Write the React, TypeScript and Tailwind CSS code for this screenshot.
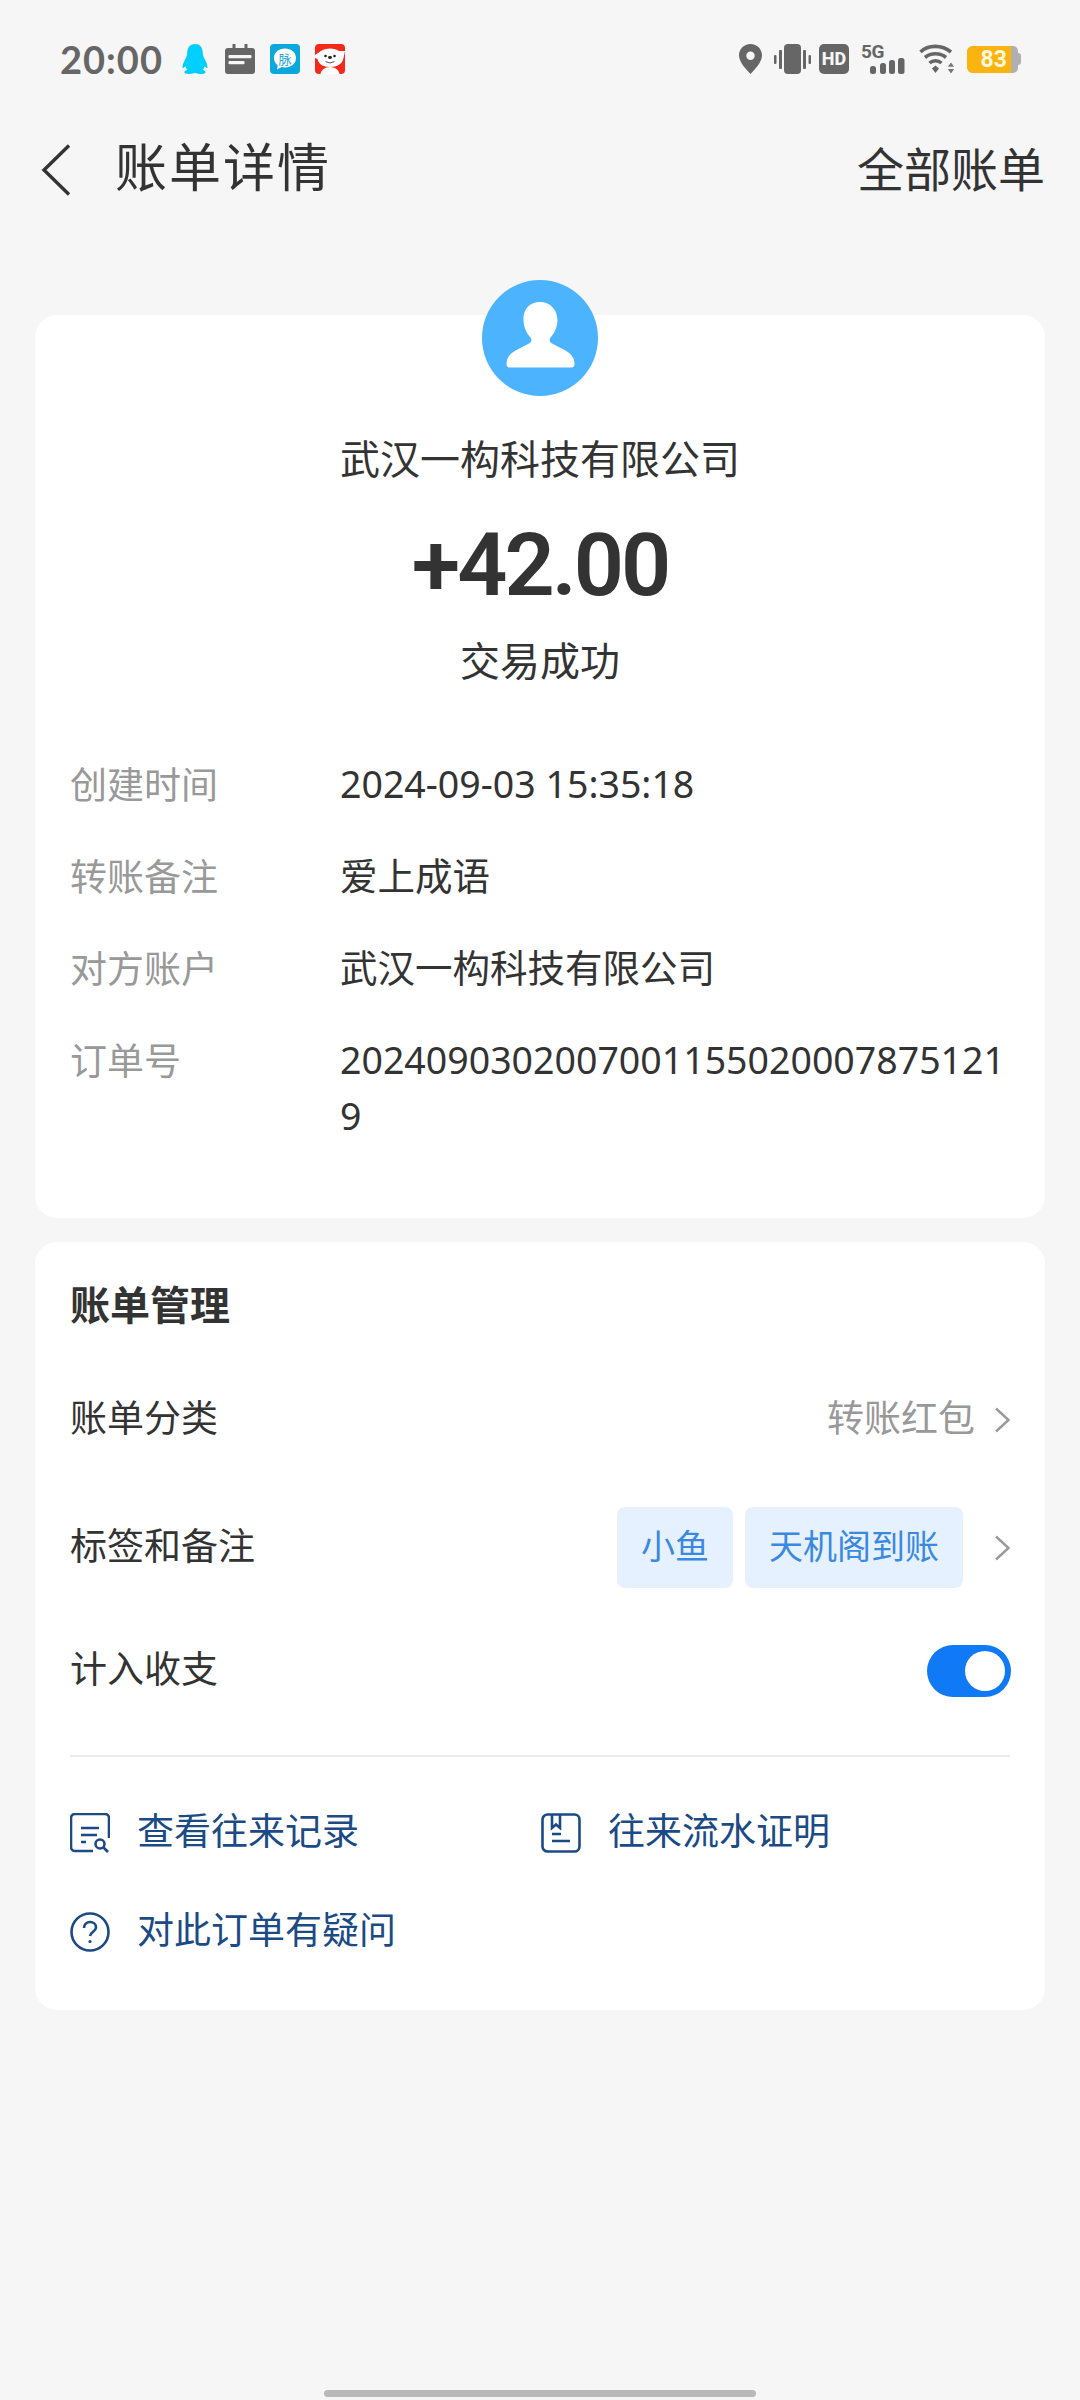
import React from "react";

const font = { fontFamily: 'Roboto, "Noto Sans CJK SC", sans-serif' };
const valueFont = { fontFamily: '"Noto Sans", "Noto Sans CJK SC", sans-serif' };

function Qq() {
  return (
    <svg width="26" height="30" viewBox="0 0 26 30" className="block">
      <path d="M13 0C7.200 0 5.200 4.400 5.200 9.500c0 2-.8 3.400-1.800 5.600C1.800 18 .2 21.500.6 23.800c.5.7 1.800-.6 2.700-1.600.3 1.400 1 2.500 2 3.600-1.600.5-2.900 1.300-2.900 2.400 0 1.400 3 1.800 5.600 1.800 2 0 3.800-.5 5-1.200 1.200.7 3 1.200 5 1.200 2.600 0 5.600-.4 5.600-1.800 0-1.100-1.300-1.900-2.900-2.400 1-1.100 1.700-2.200 2-3.600.9 1 2.200 2.300 2.700 1.600.4-2.300-1.200-5.800-2.800-8.700-1-2.200-1.800-3.600-1.800-5.600C20.800 4.400 18.800 0 13 0z" fill="#00cfff" />
    </svg>
  );
}

function CalendarGlyph() {
  return (
    <svg width="30" height="30" viewBox="0 0 30 30" className="block">
      <path d="M7.500 0h3v4h9V0h3v4H27a3 3 0 0 1 3 3v20a3 3 0 0 1-3 3H3a3 3 0 0 1-3-3V7a3 3 0 0 1 3-3h4.500z" fill="#666" />
      <rect x="3.500" y="11" width="23" height="3.200" rx="1" fill="#f6f6f6" />
      <rect x="3.500" y="17" width="16" height="3.200" rx="1" fill="#f6f6f6" />
    </svg>
  );
}

function Maimai() {
  return (
    <div className="relative flex h-[30px] w-[30px] items-center justify-center rounded-[4px] bg-[#0ba8dd]">
      <svg width="30" height="30" viewBox="0 0 30 30" className="absolute left-0 top-0">
        <path d="M15 4.500c6 0 11 3.800 11 9.500s-5 9.500-11 9.500c-1.200 0-2.300-.1-3.300-.4L7 25.500l.7-4.300C5.200 19.500 4 17 4 14c0-5.700 5-9.500 11-9.500z" fill="#fff" />
      </svg>
      <span className="relative text-[13px] leading-none text-[#2aa7d8]">脉</span>
    </div>
  );
}

function Jd() {
  return (
    <svg width="30" height="30" viewBox="0 0 30 30" className="block">
      <rect width="30" height="30" rx="4" fill="#f5281a" />
      <path d="M0 11 L6 7 C10 3.500 20 3.500 24 7 L30 7 L28.500 14 C27.500 20 22 23 15 23 C8 23 3.500 20 2.500 15 L0 14z" fill="#fff" />
      <path d="M5.500 30 C6 26 10 23 15 23 C20 23 24 26 24.500 30z" fill="#fff" />
      <circle cx="10.500" cy="12" r="1.300" fill="#222" />
      <circle cx="19.500" cy="12" r="1.300" fill="#222" />
      <ellipse cx="15" cy="13.500" rx="2" ry="1.400" fill="#222" />
      <path d="M10.500 17.500 Q15 20.500 19.500 17.500" stroke="#555" strokeWidth="1" fill="none" />
    </svg>
  );
}

function Pin() {
  return (
    <svg width="23" height="30" viewBox="0 0 23 30" className="block">
      <path fillRule="evenodd" d="M11.500 0C5 0 0 5 0 11.300c0 7 7.500 14.700 11.500 18.700C15.500 26 23 18.300 23 11.300 23 5 18 0 11.500 0zm0 7.500a4.200 4.200 0 1 1 0 8.400 4.200 4.200 0 0 1 0-8.400z" fill="#666" />
    </svg>
  );
}

function Vibrate() {
  return (
    <svg width="37" height="30" viewBox="0 0 37 30" className="block">
      <rect x="0" y="11" width="2.500" height="9" rx="1" fill="#666" />
      <rect x="5" y="6" width="3" height="19" rx="1" fill="#666" />
      <rect x="10" y="0" width="17" height="30" rx="4" fill="#666" />
      <rect x="29" y="6" width="3" height="19" rx="1" fill="#666" />
      <rect x="34.500" y="11" width="2.500" height="9" rx="1" fill="#666" />
    </svg>
  );
}

function Hd() {
  return (
    <div className="flex h-[30px] w-[30px] items-center justify-center rounded-[5px] bg-[#666] text-[18px] font-extrabold leading-none text-[#f6f6f6]" style={{ fontFamily: "Roboto, sans-serif" }}>
      HD
    </div>
  );
}

function Signal() {
  return (
    <div className="relative h-[30px] w-[44px]">
      <svg className="absolute bottom-0 left-0" width="44" height="30" viewBox="0 0 44 30">
        <rect x="9" y="22" width="6" height="8" rx="2.500" fill="#666" />
        <rect x="19" y="19" width="6" height="11" rx="2.500" fill="#666" />
        <rect x="28" y="16" width="6" height="14" rx="2.500" fill="#666" />
        <rect x="37" y="14" width="6.500" height="16" rx="2.500" fill="#666" />
      </svg>
      <span className="absolute left-0 top-[-2px] text-[19px] font-bold leading-[19px] tracking-[-0.5px] text-[#666]" style={{ fontFamily: "Roboto, sans-serif" }}>5G</span>
    </div>
  );
}

function Wifi() {
  return (
    <svg width="36" height="30" viewBox="0 0 36 30" className="block">
      <path d="M1.500 8C9 .5 23 .5 32 8" stroke="#666" strokeWidth="3.600" fill="none" />
      <path d="M6 13.500C12 8.500 21 8.500 27 13.500" stroke="#666" strokeWidth="3.600" fill="none" />
      <path d="M10.500 19C14 16 19 16 22.500 19" stroke="#666" strokeWidth="3.600" fill="none" />
      <path d="M13 24.500l3.500-3 3.500 3-3.500 4.500z" fill="#666" />
      <path d="M32 18.500l3.200 4.300h-6.400zM32 29.500l-3.200-4.500h6.400z" fill="#777" />
    </svg>
  );
}

function Battery() {
  return (
    <div className="flex h-[27px] items-center">
      <div className="h-[27px] w-[51px] overflow-hidden rounded-l-[6px] rounded-r-[5px] bg-[#b0b0b0]">
        <div className="flex h-full w-[44px] items-center justify-end bg-[#fbb40f] pr-[4px] text-[23px] font-bold leading-none text-[#fff8dc]" style={{ fontFamily: "Roboto, sans-serif" }}>
          83
        </div>
      </div>
      <div className="h-[12px] w-[3px] rounded-r-[3px] bg-[#b0b0b0]" />
    </div>
  );
}

function PersonIcon() {
  return (
    <svg width="116" height="116" viewBox="0 0 116 116" className="block">
      <circle cx="58" cy="58" r="58" fill="#4cb3ff" />
      <path d="M58 22c-10 0-17 7-16.500 18 .3 7 2.500 12.500 7 17.500 1.500 2 1 4.500-1.500 6-4.500 2.800-12 5.500-16.500 9-3.200 2.500-6 6-6 11.500 0 2.500 1 3.500 3.500 3.500h61c2.500 0 3.500-1 3.500-3.500 0-5.500-2.800-9-6-11.500-4.500-3.500-12-6.200-16.500-9-2.500-1.500-3-4-1.500-6 4.500-5 6.700-10.500 7-17.500C75 29 68 22 58 22z" fill="#fff" />
    </svg>
  );
}

function Chevron() {
  return (
    <svg width="15" height="26" viewBox="0 0 15 26" className="block">
      <path d="M1 1.500L13.500 13 1 24.500" stroke="#999" strokeWidth="2.400" fill="none" />
    </svg>
  );
}

function RecordIcon() {
  return (
    <svg width="40" height="40" viewBox="0 0 40 40" fill="none" stroke="#1b4a85" strokeWidth="2.600" className="block shrink-0">
      <path d="M23 38H5a4 4 0 0 1-4-4V5a4 4 0 0 1 4-4h30a4 4 0 0 1 4 4v20" />
      <path d="M11 15h18M11 22h16M11 29h5" />
      <circle cx="30" cy="31" r="4.500" />
      <path d="M33.500 34.500L38 39" />
    </svg>
  );
}

function ProofIcon() {
  return (
    <svg width="40" height="40" viewBox="0 0 40 40" fill="none" stroke="#1b4a85" strokeWidth="2.600" className="block shrink-0">
      <rect x="1.500" y="1.500" width="37" height="37" rx="5" />
      <path d="M11 2v13l4-3.500 4 3.500V2" />
      <path d="M11 21h9M11 28h18" />
    </svg>
  );
}

function HelpIcon() {
  return (
    <svg width="40" height="40" viewBox="0 0 40 40" fill="none" stroke="#1b4a85" strokeWidth="2.600" className="block shrink-0">
      <circle cx="20" cy="20" r="18.500" />
      <path d="M14 16c0-3.500 2.700-6 6-6s6 2.300 6 5.500c0 4-5.500 4.500-6 8.500" />
      <circle cx="20" cy="29.500" r="1.600" fill="#1b4a85" stroke="none" />
    </svg>
  );
}

function InfoRow({ label, children }: { label: string; children: React.ReactNode }) {
  return (
    <div className="flex leading-[56px]">
      <div className="w-[270px] shrink-0 text-[37px] text-[#999]">{label}</div>
      <div className="-mt-[3px] min-w-0 flex-1 break-all text-[37.5px] text-[#333]" style={valueFont}>{children}</div>
    </div>
  );
}

export default function App() {
  return (
    <div className="flex h-[2400px] w-[1080px] flex-col overflow-hidden bg-[#f6f6f6]" style={font}>
      <div className="mt-[29px] flex h-[60px] items-center justify-between pl-[60px] pr-[59px]">
        <div className="flex items-center">
          <span className="text-[38px] font-bold leading-none tracking-[1px] text-[#666]" style={{ fontFamily: "Lato, sans-serif" }}>20:00</span>
          <div className="ml-[19px] flex items-center">
            <Qq />
            <div className="ml-[17px]"><CalendarGlyph /></div>
            <div className="ml-[15px]"><Maimai /></div>
            <div className="ml-[15px]"><Jd /></div>
          </div>
        </div>
        <div className="flex items-center">
          <Pin />
          <div className="ml-[12px]"><Vibrate /></div>
          <div className="ml-[8px]"><Hd /></div>
          <div className="ml-[12px]"><Signal /></div>
          <div className="ml-[14px]"><Wifi /></div>
          <div className="ml-[12px]"><Battery /></div>
        </div>
      </div>

      <div className="mt-[51px] flex h-[60px] items-center justify-between pl-[41px] pr-[35px]">
        <div className="flex items-center">
          <svg width="30" height="52" viewBox="0 0 30 52" className="block">
            <path d="M28 1.500L3 26l25 24.500" stroke="#333" strokeWidth="3.400" fill="none" />
          </svg>
          <span className="ml-[44px] text-[52px] leading-none tracking-[2px] text-[#333]">账单详情</span>
        </div>
        <span className="text-[47px] leading-none text-[#333]">全部账单</span>
      </div>

      <div className="mx-[35px] mt-[115px] flex flex-col rounded-[22px] bg-white px-[35px] pb-[74px]">
        <div className="-mt-[35px] flex justify-center">
          <PersonIcon />
        </div>
        <div className="mt-[40px] text-center text-[40px] leading-[50px] text-[#333]">武汉一构科技有限公司</div>
        <div className="mt-[29px] text-center text-[88px] font-semibold leading-[100px] tracking-[-3px] text-[#333]">+42.00</div>
        <div className="mt-[23px] text-center text-[40px] leading-[50px] text-[#333]">交易成功</div>
        <div className="mt-[71px] flex flex-col gap-[36px]">
          <InfoRow label="创建时间">2024-09-03 15:35:18</InfoRow>
          <InfoRow label="转账备注">爱上成语</InfoRow>
          <InfoRow label="对方账户">武汉一构科技有限公司</InfoRow>
          <InfoRow label="订单号">20240903020070011550200078751219</InfoRow>
        </div>
      </div>

      <div className="mx-[35px] mt-[24px] flex flex-col rounded-[22px] bg-white px-[35px] pb-[58px]">
        <div className="mt-[40px] text-[40px] font-bold leading-[50px] text-[#333]">账单管理</div>
        <div className="mt-[63px] flex h-[50px] items-center justify-between text-[37px]">
          <span className="text-[#333]">账单分类</span>
          <div className="flex items-center gap-[20px]">
            <span className="text-[#999]">转账红包</span>
            <Chevron />
          </div>
        </div>
        <div className="mt-[62px] flex h-[81px] items-center justify-between text-[37px]">
          <span className="text-[#333]">标签和备注</span>
          <div className="flex items-center">
            <span className="flex h-[81px] items-center rounded-[8px] bg-[#e6f1ff] px-[24px] text-[34px] text-[#3b88e0]">小鱼</span>
            <span className="ml-[12px] flex h-[81px] items-center rounded-[8px] bg-[#e6f1ff] px-[24px] text-[34px] text-[#3b88e0]">天机阁到账</span>
            <div className="ml-[32px]">
              <Chevron />
            </div>
          </div>
        </div>
        <div className="mt-[57px] flex h-[52px] items-center justify-between text-[37px]">
          <span className="text-[#333]">计入收支</span>
          <div className="-mr-[1px] flex h-[52px] w-[84px] items-center justify-end rounded-full bg-[#1079f5] pr-[6px]">
            <div className="h-[40px] w-[40px] rounded-full bg-white" />
          </div>
        </div>
        <div className="mt-[58px] h-[2px] bg-[#ebebeb]" />
        <div className="mt-[56px] grid grid-cols-[471px_1fr] gap-y-[59px] text-[37px] leading-[40px] text-[#1b4a85]">
          <div className="flex items-center gap-[27px]"><RecordIcon /><span>查看往来记录</span></div>
          <div className="flex items-center gap-[27px]"><ProofIcon /><span>往来流水证明</span></div>
          <div className="flex items-center gap-[27px]"><HelpIcon /><span>对此订单有疑问</span></div>
        </div>
      </div>

      <div className="mb-[3px] mt-auto flex justify-center">
        <div className="h-[7px] w-[432px] rounded-full bg-[#b9b9b9]" />
      </div>
    </div>
  );
}
